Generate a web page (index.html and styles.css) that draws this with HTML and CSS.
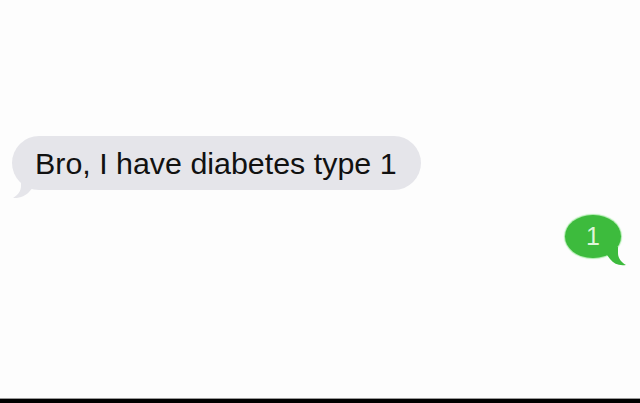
FILE: index.html
```html
<!DOCTYPE html>
<html>
<head>
<meta charset="utf-8">
<link rel="stylesheet" href="styles.css">
</head>
<body>
<div class="screen">
  <div class="thread">
    <div class="row row-in">
      <div class="bubble bubble-in">
        <span class="msg">Bro, I have diabetes type 1</span>
        <svg class="tail tail-in" width="24" height="22" viewBox="0 0 24 22"><path d="M9 0 L9 9 C9 14 6 18 1 21 C8 21.5 14 18.5 17 15 L23 8 L23 0 Z" fill="#e5e5ea"/></svg>
      </div>
    </div>
    <div class="row row-out">
      <div class="bubble bubble-out">
        <span class="msg-out">1</span>
        <svg class="tail tail-out" width="20" height="20" viewBox="0 0 20 20"><path d="M11 0 L11 6 C11 11 14 15 19 18 C12 19 7 17 3 12 L0 8 L0 0 Z" fill="#3dbb3d"/></svg>
      </div>
    </div>
  </div>
  <div class="bottom-bar"></div>
</div>
</body>
</html>
```
FILE: styles.css
```css
html, body {
  margin: 0;
  padding: 0;
  background: #fdfdfd;
}
.screen {
  width: 640px;
  height: 403px;
  display: flex;
  flex-direction: column;
  overflow: hidden;
}
.thread {
  flex: 1;
  display: flex;
  flex-direction: column;
  padding-top: 136px;
}
.row {
  display: flex;
}
.row-in {
  padding-left: 12px;
}
.row-out {
  justify-content: flex-end;
  padding-right: 19px;
  margin-top: 25px;
}
.bubble {
  position: relative;
}
.bubble-in {
  background: #e5e5ea;
  height: 54px;
  border-radius: 27px;
  padding: 0 24px 0 23px;
  display: flex;
  align-items: center;
}
.msg {
  font-family: "Liberation Sans", Arial, sans-serif;
  font-size: 30.4px;
  color: #111;
  position: relative;
  z-index: 1;
  line-height: 1;
}
.tail {
  position: absolute;
}
.tail-in {
  left: 0;
  top: 41px;
}
.bubble-out {
  background: #3dbb3d;
  width: 56px;
  height: 43px;
  border-radius: 28px / 22px;
  display: flex;
  align-items: center;
  justify-content: center;
  box-shadow: 0 0 1px 1px rgba(90, 220, 90, 0.5);
}
.msg-out {
  font-family: "Liberation Sans", Arial, sans-serif;
  font-size: 25px;
  color: #dff5d8;
  line-height: 1;
  position: relative;
  z-index: 1;
}
.tail-out {
  right: -6px;
  top: 32px;
}
.bottom-bar {
  height: 4px;
  background: #000;
  border-top: 1px solid #9a9a9a;
}
```
